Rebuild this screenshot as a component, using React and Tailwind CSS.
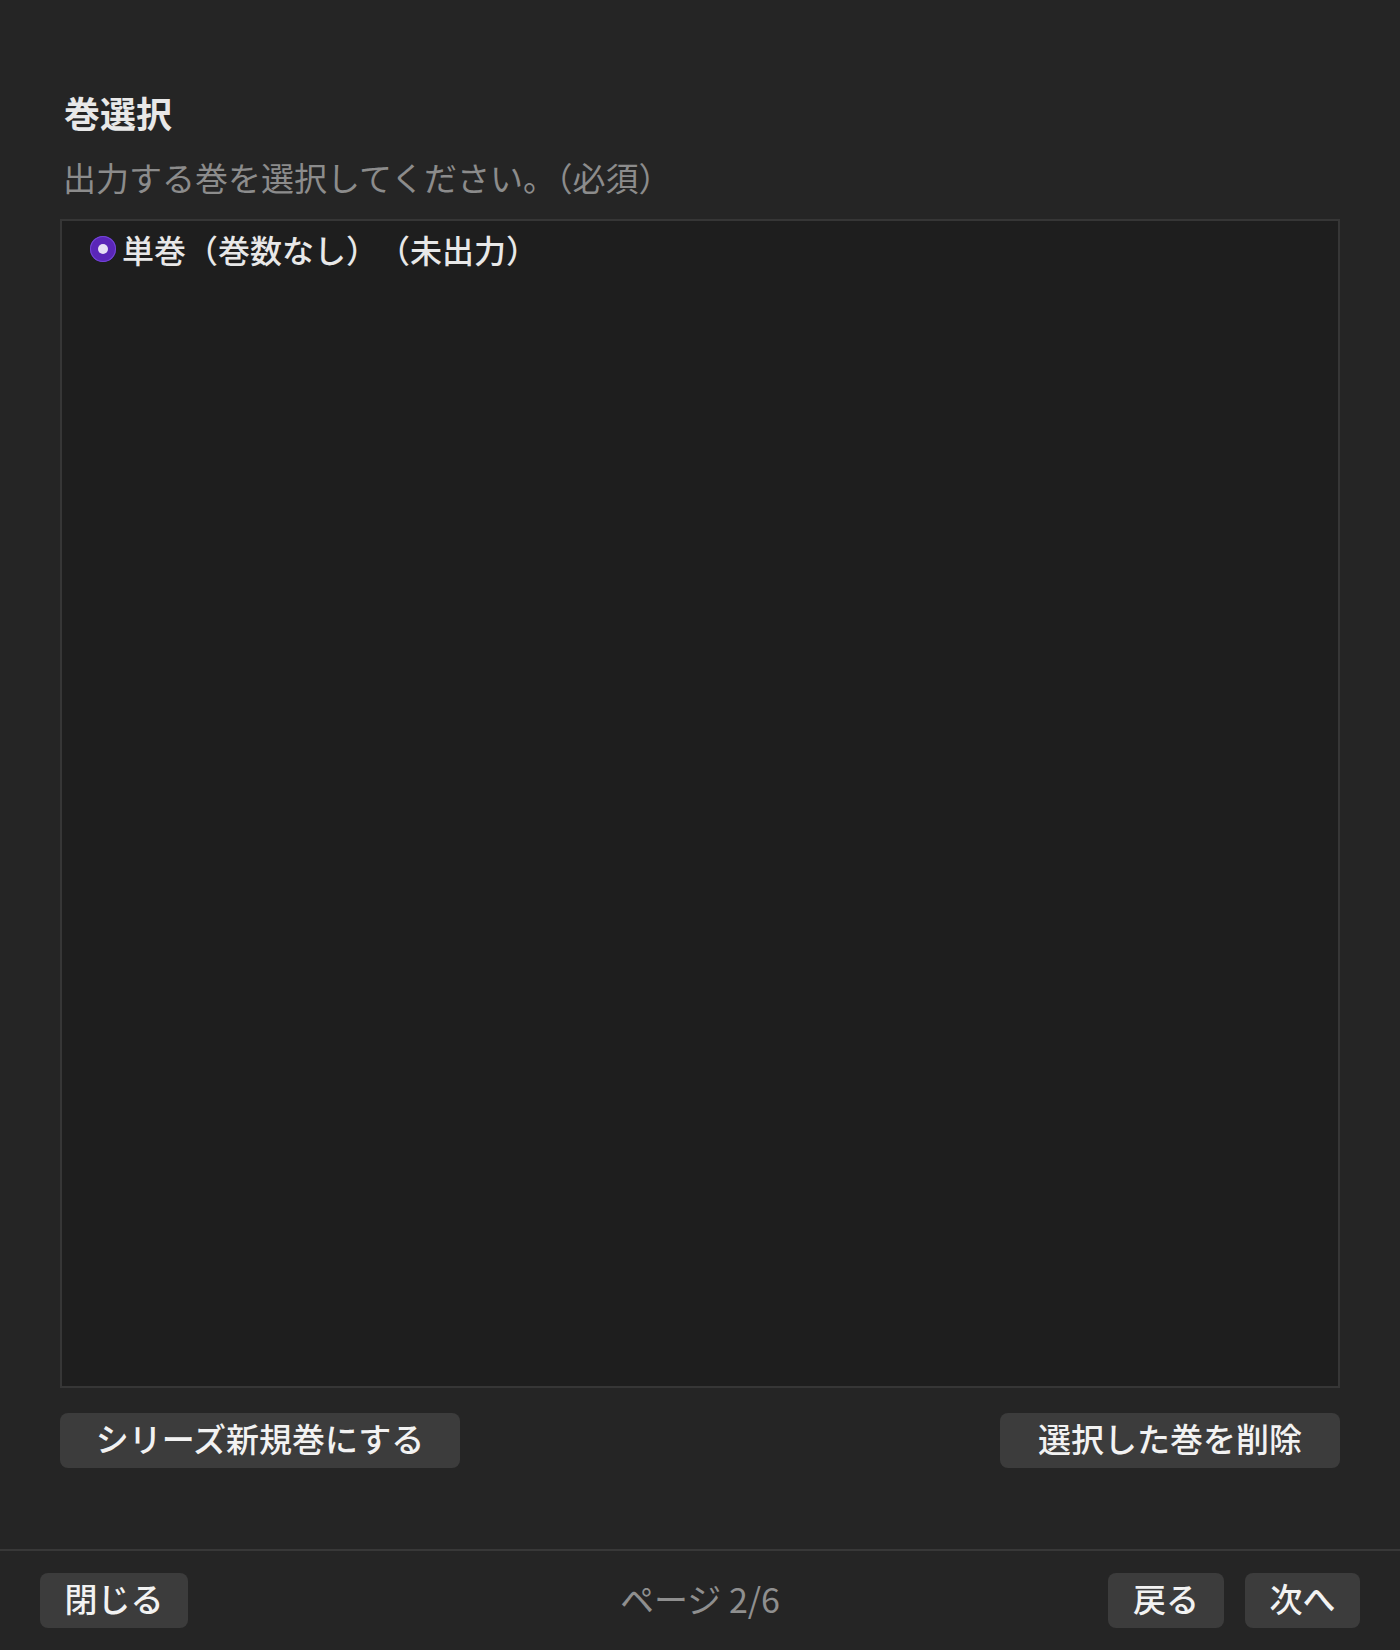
import React from 'react';

const font = { fontFamily: '"Noto Sans CJK JP", "Noto Sans", sans-serif' };

function Button({ children, className = '' }) {
  return (
    <button
      type="button"
      className={`h-[55px] rounded-lg bg-[#3c3c3c] pb-[5px] text-[33px] font-medium leading-none text-[#f2f2f2] ${className}`}
    >
      {children}
    </button>
  );
}

export default function App() {
  return (
    <div style={font} className="flex h-[1650px] w-[1400px] flex-col bg-[#252525]">
      <div className="flex flex-1 flex-col px-[60px] pt-[90px]">
        <h1 className="pl-[4px] text-[36px] font-bold leading-[44px] text-[#e8e8e8]">巻選択</h1>
        <p className="mt-[23px] pl-[3px] text-[33px] leading-[40px] text-[#8c8c8c]">
          出力する巻を選択してください。（必須）
        </p>

        <div className="mt-[22px] h-[1169px] border-2 border-[#363636] bg-[#1e1e1e] px-[28px] pt-[8px]">
          <label className="flex items-center gap-[6px]">
            <span className="flex h-[26px] w-[26px] items-center justify-center rounded-full bg-[#5a26b8] shadow-[inset_0_0_0_1px_#7446d8]">
              <span className="h-[10px] w-[10px] rounded-full bg-[#e6e0f5]" />
            </span>
            <span className="text-[32px] font-medium leading-[40px] text-[#e8e8e8] [text-spacing-trim:space-all]">
              単巻（巻数なし）（未出力）
            </span>
          </label>
        </div>

        <div className="mt-[25px] flex items-start justify-between">
          <Button className="w-[400px]">シリーズ新規巻にする</Button>
          <Button className="w-[340px]">選択した巻を削除</Button>
        </div>
      </div>

      <footer className="grid h-[101px] grid-cols-3 items-center border-t-2 border-[#383838] px-[40px]">
        <div>
          <Button className="h-[54px] w-[148px]">閉じる</Button>
        </div>
        <div className="pb-[5px] text-center text-[34px] text-[#8f8f8f]">ページ 2/6</div>
        <div className="flex justify-end gap-[21px]">
          <Button className="h-[54px] w-[116px]">戻る</Button>
          <Button className="h-[54px] w-[115px]">次へ</Button>
        </div>
      </footer>
    </div>
  );
}
